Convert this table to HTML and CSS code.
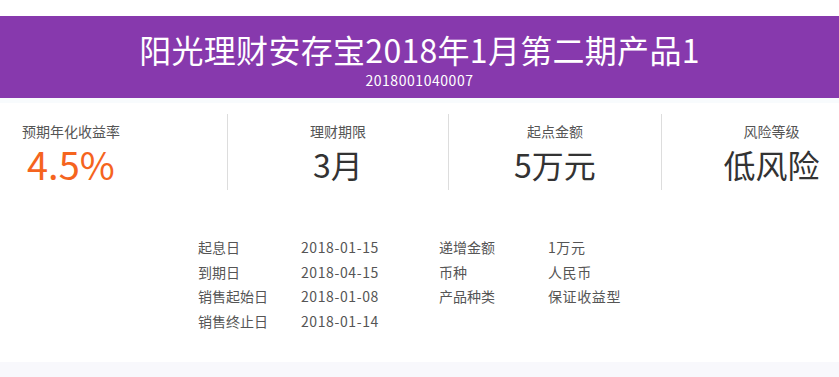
FILE: index.html
```html
<!DOCTYPE html>
<html lang="zh-CN">
<head>
<meta charset="utf-8">
<link rel="stylesheet" href="styles.css">
</head>
<body>
<div class="page">
  <header class="banner">
    <h1 class="title">阳光理财安存宝2018年1月第二期产品1</h1>
    <div class="code">2018001040007</div>
  </header>
  <div class="tint"></div>
  <section class="stats">
    <div class="stat first">
      <div class="label">预期年化收益率</div>
      <div class="value rate">4.5%</div>
    </div>
    <div class="stat">
      <div class="label">理财期限</div>
      <div class="value">3月</div>
    </div>
    <div class="stat">
      <div class="label">起点金额</div>
      <div class="value">5万元</div>
    </div>
    <div class="stat last">
      <div class="label">风险等级</div>
      <div class="value">低风险</div>
    </div>
  </section>
  <section class="details">
    <span class="k">起息日</span><span class="v">2018-01-15</span><span class="k">递增金额</span><span class="v">1万元</span>
    <span class="k">到期日</span><span class="v">2018-04-15</span><span class="k">币种</span><span class="v">人民币</span>
    <span class="k">销售起始日</span><span class="v">2018-01-08</span><span class="k">产品种类</span><span class="v">保证收益型</span>
    <span class="k">销售终止日</span><span class="v">2018-01-14</span><span class="k"></span><span class="v"></span>
  </section>
  <div class="footer-band"></div>
</div>
</body>
</html>
```

FILE: styles.css
```css
html, body {
  margin: 0;
  padding: 0;
  background: #ffffff;
  overflow: hidden;
}
.page {
  width: 839px;
  height: 377px;
  font-family: "Noto Sans CJK SC", "Noto Sans", sans-serif;
  color: #555555;
  padding-top: 16px;
  box-sizing: border-box;
  display: flex;
  flex-direction: column;
}
.banner {
  background: #8739ad;
  height: 82px;
  display: flex;
  flex-direction: column;
  align-items: center;
  color: #ffffff;
}
.title {
  margin: 0;
  padding-top: 13px;
  font-size: 32px;
  font-weight: 400;
  line-height: 40px;
  letter-spacing: 0.3px;
}
.code {
  font-size: 14px;
  line-height: 18px;
  margin-top: 2px;
  letter-spacing: 0.55px;
}
.tint {
  height: 5px;
  background: #f8fbfd;
}
.stats {
  display: grid;
  grid-template-columns: 227px 221px 213px 1fr;
  margin-top: 11px;
}
.stat {
  height: 76px;
  padding-top: 7px;
  box-sizing: border-box;
  text-align: center;
  border-left: 1px solid #dddddd;
}
.stat.first {
  border-left: none;
  text-align: left;
  padding-left: 22px;
}
.stat.last {
  padding-left: 42px;
}
.label {
  font-size: 14px;
  line-height: 20px;
  color: #555555;
}
.value {
  font-size: 32px;
  line-height: 40px;
  margin-top: 3px;
  color: #333333;
}
.value.rate {
  font-size: 38px;
  color: #f5641e;
  padding-left: 5px;
}
.details {
  display: grid;
  grid-template-columns: 103px 138px 109px 120px;
  grid-auto-rows: 24.5px;
  align-items: center;
  padding-left: 198px;
  margin-top: 45px;
  font-size: 14px;
  color: #555555;
}
.details span {
  line-height: 24.5px;
  white-space: nowrap;
}
.details .v {
  letter-spacing: 0.6px;
}
.footer-band {
  margin-top: auto;
  height: 15px;
  background: #f8f8fc;
}
```
